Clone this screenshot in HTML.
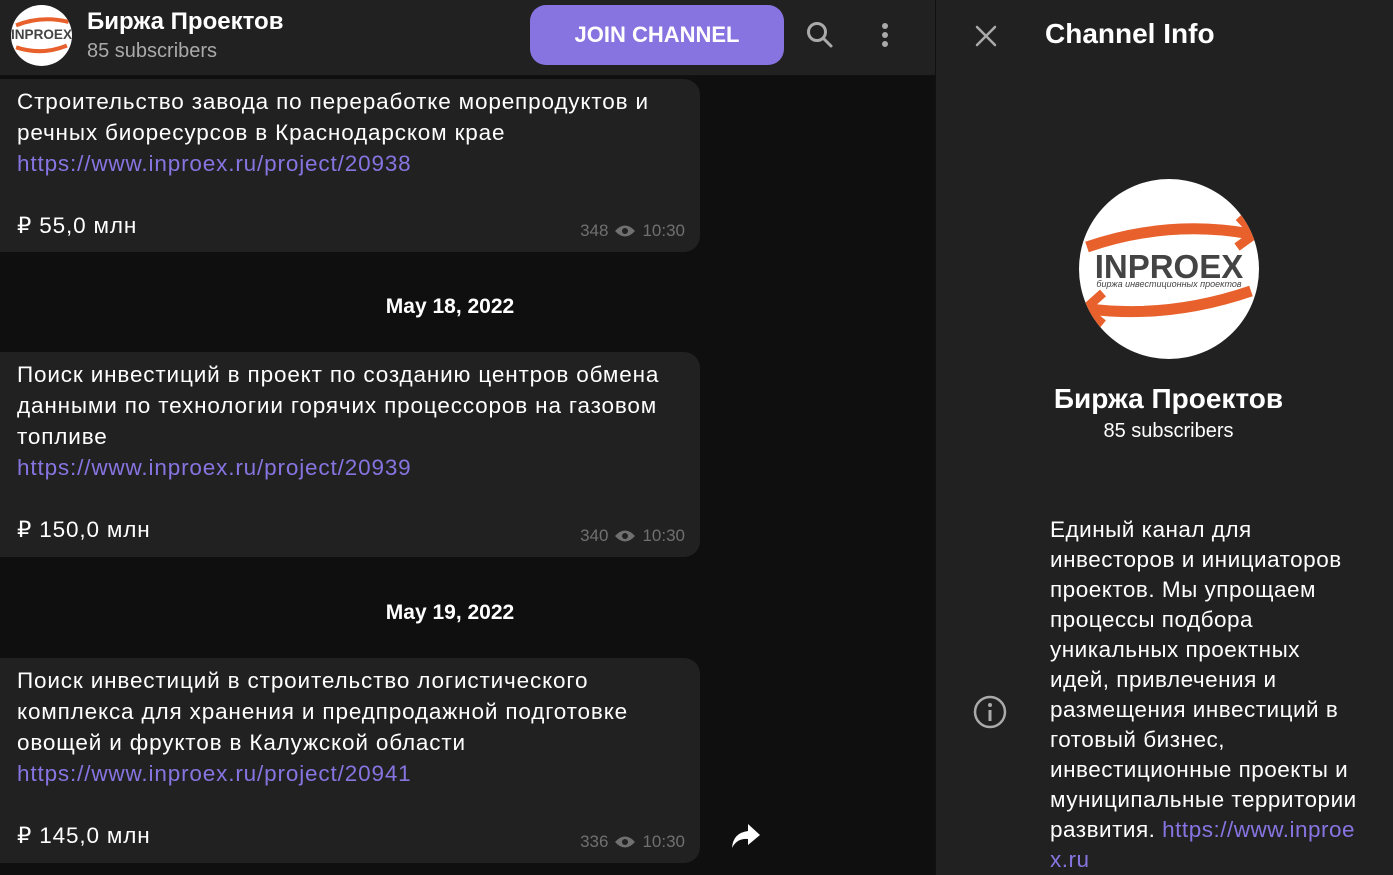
<!DOCTYPE html>
<html><head><meta charset="utf-8"><style>
*{margin:0;padding:0;box-sizing:border-box}
body{width:1393px;height:875px;overflow:hidden;background:#0f0f0f;font-family:"Liberation Sans","Noto Sans CJK SC",sans-serif;color:#fff;position:relative}
.hdr{position:absolute;left:0;top:0;width:935px;height:76px;background:#212121;border-bottom:1px solid #111}
.av{position:absolute;left:11px;top:5px;width:61px;height:61px;border-radius:50%;background:#fff;overflow:hidden}
.title{position:absolute;left:87px;top:8px;font-size:24px;font-weight:bold}
.sub{position:absolute;left:87px;top:40px;font-size:20px;color:#aaa}
.join{position:absolute;left:530px;top:5px;width:254px;height:60px;border-radius:16px;background:#8774e1;font-size:22px;font-weight:bold;text-align:center;line-height:60px}
.bub{position:absolute;left:0;width:700px;background:#212121;border-radius:0 16px 16px 0;padding:7px 17px;font-size:22.5px;letter-spacing:0.85px;line-height:31px;white-space:nowrap}
.a{color:#8774e1}
.meta{position:absolute;right:15px;bottom:6px;font-size:17px;color:#707070;display:flex;align-items:center;gap:6px;letter-spacing:0}
.date{position:absolute;left:0;width:900px;text-align:center;font-size:21px;font-weight:bold}
.rp{position:absolute;left:935px;top:0;width:458px;height:875px;background:#212121;border-left:1px solid #111}
</style></head><body>
<div class="hdr">
<div class="av"><svg width="61" height="61" viewBox="0 0 180 180"><path d="M15 60 Q90 30 170 50" stroke="#e8612c" stroke-width="12" fill="none"/><path d="M165 120 Q90 150 15 125" stroke="#e8612c" stroke-width="12" fill="none"/><text x="90" y="100" font-size="40" font-weight="bold" text-anchor="middle" fill="#444" font-family="Liberation Sans">INPROEX</text></svg></div>
<div class="title">Биржа Проектов</div>
<div class="sub">85 subscribers</div>
<div class="join">JOIN CHANNEL</div>
<svg style="position:absolute;left:805px;top:20px" width="30" height="30" viewBox="0 0 30 30"><circle cx="12" cy="12" r="8.5" stroke="#aaa" stroke-width="3" fill="none"/><path d="M18 18l8 8" stroke="#aaa" stroke-width="3" stroke-linecap="round"/></svg>
<svg style="position:absolute;left:879px;top:22px" width="12" height="28"><circle cx="6" cy="4" r="3" fill="#aaa"/><circle cx="6" cy="13" r="3" fill="#aaa"/><circle cx="6" cy="22" r="3" fill="#aaa"/></svg>
</div>
<div class="bub" style="top:79px;height:173px">Строительство завода по переработке морепродуктов и<br>речных биоресурсов в Краснодарском крае<br><span class="a">https://www.inproex.ru/project/20938</span><br><br>₽ 55,0 млн<div class="meta">348 <svg width="22" height="14" viewBox="0 0 22 14"><path d="M1 7Q11-4 21 7Q11 18 1 7z" fill="#707070"/><circle cx="11" cy="7" r="3" fill="#212121"/></svg> 10:30</div></div>
<div class="date" style="top:295px">May 18, 2022</div>
<div class="bub" style="top:352px;height:205px">Поиск инвестиций в проект по созданию центров обмена<br>данными по технологии горячих процессоров на газовом<br>топливе<br><span class="a">https://www.inproex.ru/project/20939</span><br><br>₽ 150,0 млн<div class="meta">340 <svg width="22" height="14" viewBox="0 0 22 14"><path d="M1 7Q11-4 21 7Q11 18 1 7z" fill="#707070"/><circle cx="11" cy="7" r="3" fill="#212121"/></svg> 10:30</div></div>
<div class="date" style="top:601px">May 19, 2022</div>
<div class="bub" style="top:658px;height:205px">Поиск инвестиций в строительство логистического<br>комплекса для хранения и предпродажной подготовке<br>овощей и фруктов в Калужской области<br><span class="a">https://www.inproex.ru/project/20941</span><br><br>₽ 145,0 млн<div class="meta">336 <svg width="22" height="14" viewBox="0 0 22 14"><path d="M1 7Q11-4 21 7Q11 18 1 7z" fill="#707070"/><circle cx="11" cy="7" r="3" fill="#212121"/></svg> 10:30</div></div>
<svg style="position:absolute;left:730px;top:822px" width="32" height="28" viewBox="0 0 32 28"><path d="M18 2L30 13L18 23V17Q7 16 2 26Q3 11 18 9z" fill="#fff"/></svg>
<div class="rp">
<svg style="position:absolute;left:38px;top:24px" width="24" height="24"><path d="M3 3L21 21M21 3L3 21" stroke="#aaa" stroke-width="2.5" stroke-linecap="round"/></svg>
<div style="position:absolute;left:109px;top:18px;font-size:28px;font-weight:bold">Channel Info</div>
<div style="position:absolute;left:143px;top:179px;width:180px;height:180px;border-radius:50%;background:#fff;overflow:hidden"><svg width="180" height="180" viewBox="0 0 180 180"><path d="M8 68 Q90 40 172 55" stroke="#e8612c" stroke-width="11" fill="none"/><path d="M160 38L176 55L158 68" stroke="#e8612c" stroke-width="9" fill="none"/><path d="M172 112 Q90 140 10 130" stroke="#e8612c" stroke-width="11" fill="none"/><path d="M24 114L6 130L24 145" stroke="#e8612c" stroke-width="9" fill="none"/><text x="90" y="99" font-size="33" font-weight="bold" text-anchor="middle" fill="#444" font-family="Liberation Sans">INPROEX</text><text x="90" y="108" font-size="9" font-style="italic" text-anchor="middle" fill="#444" font-family="Liberation Sans">биржа инвестиционных проектов</text></svg></div>
<div style="position:absolute;left:0;width:465px;top:383px;text-align:center;font-size:28px;font-weight:bold">Биржа Проектов</div>
<div style="position:absolute;left:0;width:465px;top:420px;text-align:center;font-size:20px">85 subscribers</div>
<svg style="position:absolute;left:37px;top:695px" width="34" height="34"><circle cx="17" cy="17" r="15" stroke="#aaa" stroke-width="2.5" fill="none"/><circle cx="17" cy="10" r="2" fill="#aaa"/><path d="M17 15v11" stroke="#aaa" stroke-width="3"/></svg>
<div style="position:absolute;left:114px;top:515px;width:330px;font-size:22.5px;letter-spacing:0.5px;line-height:30px">Единый канал для<br>инвесторов и инициаторов<br>проектов. Мы упрощаем<br>процессы подбора<br>уникальных проектных<br>идей, привлечения и<br>размещения инвестиций в<br>готовый бизнес,<br>инвестиционные проекты и<br>муниципальные территории<br>развития. <span class="a">https://www.inproe<br>x.ru</span></div>
</div>
</body></html>
